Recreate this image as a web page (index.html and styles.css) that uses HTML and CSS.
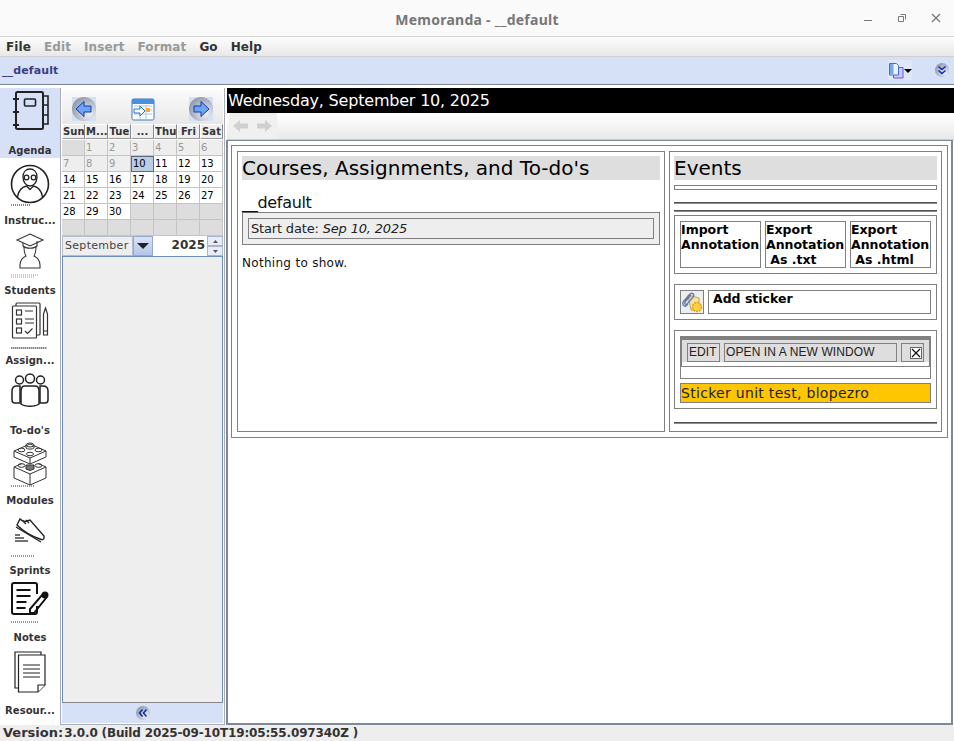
FILE: index.html
```html
<!DOCTYPE html>
<html lang="en">
<head>
<meta charset="utf-8">
<title>Memoranda - __default</title>
<link rel="stylesheet" href="styles.css">
</head>
<body>
<svg class="defs" width="0" height="0"><defs><radialGradient id="sphere" cx="70%" cy="70%" r="80%"><stop offset="0" stop-color="#eef0f6"/><stop offset="1" stop-color="#8d96a8"/></radialGradient></defs></svg>
<div class="app">
  <header class="titlebar">
    <div class="title-text">Memoranda - __default</div>
    <div class="win-controls">
      <svg width="16" height="16" viewBox="0 0 16 16"><path d="M0 10.500H8" stroke="#777" stroke-width="1" fill="none"/></svg>
      <svg width="16" height="16" viewBox="0 0 16 16"><path d="M1.500 6.500h5v5h-5z M3.500 4.500h5v5" stroke="#777" fill="none"/></svg>
      <svg width="16" height="16" viewBox="0 0 16 16"><path d="M1 4L9 12M9 4L1 12" stroke="#777" stroke-width="1.300" fill="none"/></svg>
    </div>
  </header>
  <nav class="menubar">
    <span class="menu">File</span><span class="menu off">Edit</span><span class="menu off">Insert</span><span class="menu off">Format</span><span class="menu">Go</span><span class="menu">Help</span>
  </nav>
  <div class="projectbar">
    <span class="project-name">__default</span>
    <div class="project-tools">
      <span class="doc-btn">
        <svg width="24" height="20" viewBox="0 0 24 20"><path d="M5.500 7.500h9.500v10.500H5.500z" fill="#cfc8fb" stroke="#6a5ae0"/><path d="M1.500 3.500h7l2 2v9.500H1.500z" fill="#eef4ff" stroke="#3a6ee0"/><path d="M2 4h3.500v10.500H2z" fill="#7aa8ee"/><path d="M16 9h8l-4 4z" fill="#000"/></svg>
      </span>
      <svg class="round-btn" width="14" height="14" viewBox="0 0 14 14"><circle cx="7" cy="7" r="7" fill="url(#sphere)"/><path d="M3.500 3.500L7 6.500L10.500 3.500M3.500 7.500L7 10.500L10.500 7.500" stroke="#0a2fa8" stroke-width="1.600" fill="none"/></svg>
    </div>
  </div>
  <div class="rule"></div>
  <main class="workspace">
    <aside class="sidebar">
      <div class="side-item selected">
        <svg width="60" height="55" viewBox="0 0 60 55"><g fill="none" stroke="#222" stroke-width="1.600"><rect x="16" y="4" width="27" height="37" rx="1.500" stroke-width="2"/><rect x="24.500" y="11" width="11" height="7" rx="1" /><path d="M13 11h6M13 24h6M13 37h6" stroke-width="2"/><path d="M43 8h5v9h-5M43 17h5v10h-5M43 27h5v9h-5"/></g></svg>
        <span class="side-label">Agenda</span>
      </div>
      <div class="side-item">
        <svg width="60" height="55" viewBox="0 0 60 55"><g fill="none" stroke="#222" stroke-width="1.300"><circle cx="30" cy="26" r="18.500" stroke-width="1.600"/><path d="M23 19c0-5 3-8 7-8s7 3 7 8c0 5-3 9-7 9s-7-4-7-9z"/><circle cx="26.500" cy="19.500" r="2.300"/><circle cx="33.500" cy="19.500" r="2.300"/><path d="M17.500 39c1-7 5-10 9-11l3.500 3.500 3.500-3.500c4 1 8 4 9 11"/></g><path d="M11 47h19" stroke="#888" stroke-width="2" stroke-dasharray="1 1"/></svg>
        <span class="side-label">Instruc...</span>
      </div>
      <div class="side-item">
        <svg width="60" height="55" viewBox="0 0 60 55"><g fill="none" stroke="#333" stroke-width="1.100"><path d="M30 6l13 6-13 6-13-6z"/><path d="M23 15v3c3 3 11 3 14 0v-3M37 13v5"/><path d="M24 19c0 6 2 9 2 9-4 2-6 4-6 9v3h20v-3c0-5-2-7-6-9 0 0 2-3 2-9"/></g><path d="M11 47h28M11 49h24" stroke="#999" stroke-width="1" stroke-dasharray="1 1"/></svg>
        <span class="side-label">Students</span>
      </div>
      <div class="side-item">
        <svg width="60" height="55" viewBox="0 0 60 55"><g fill="none" stroke="#333" stroke-width="1.200"><rect x="16" y="5" width="24" height="32" rx="1"/><rect x="12.500" y="8" width="24" height="32" rx="1" fill="#fff"/><rect x="16.500" y="12" width="5" height="5"/><rect x="16.500" y="21" width="5" height="5"/><rect x="16.500" y="30" width="5" height="5"/><path d="M25 13h8M25 21h9M25 25h9M25 33l2.500 2.500 5-5"/><path d="M43.500 16l2-6 2 6v21h-4zM43.500 33h4"/></g><path d="M11 50h36" stroke="#888" stroke-width="2" stroke-dasharray="1.500 .5"/></svg>
        <span class="side-label">Assign...</span>
      </div>
      <div class="side-item">
        <svg width="60" height="55" viewBox="0 0 60 55"><g fill="#fff" stroke="#222" stroke-width="1.500"><circle cx="19.500" cy="12" r="4"/><circle cx="40.500" cy="12" r="4"/><path d="M17 18c-3 0-5 1-5 5v9c0 2 1 3 3 3h5V18zM43 18c3 0 5 1 5 5v9c0 2-1 3-3 3h-5V18z"/><circle cx="30" cy="10.500" r="4.500"/><path d="M25 18h10c3 0 4 2 4 5v13c-4 3-14 3-18 0V23c0-3 1-5 4-5z"/></g></svg>
        <span class="side-label">To-do's</span>
      </div>
      <div class="side-item">
        <svg width="60" height="55" viewBox="0 0 60 55"><g fill="none" stroke="#333" stroke-width="1"><path d="M14 13l16-7 16 7-16 7zM14 13v6l16 7 16-7v-6M30 20v6"/><ellipse cx="30" cy="7" rx="4" ry="2"/><path d="M26 7v3c1 1.500 7 1.500 8 0V7"/><ellipse cx="21.500" cy="12" rx="3.500" ry="1.800"/><ellipse cx="38.500" cy="12" rx="3.500" ry="1.800"/><ellipse cx="30" cy="16" rx="3.500" ry="1.800"/><path d="M14 29l8-3.500M46 29l-8-3.500M14 29l16 7 16-7M14 29v11l16 7 16-7V29M30 36v11"/><ellipse cx="21.500" cy="27.500" rx="3.500" ry="1.800"/><ellipse cx="38.500" cy="27.500" rx="3.500" ry="1.800"/><path d="M26 27h8v4l-4 1.500-4-1.500z" fill="#777"/></g><path d="M11 48h24" stroke="#999" stroke-width="2" stroke-dasharray="1 1"/></svg>
        <span class="side-label">Modules</span>
      </div>
      <div class="side-item">
        <svg width="60" height="55" viewBox="0 0 60 55"><g fill="none" stroke="#222" stroke-width="1.400"><path d="M17 17l3-6c2 2 4 3 7 2l3-1 14 16v2c0 2-2 2-4 1-9-3-17-8-23-14z" fill="#fff"/><path d="M16 19l25 15M23 13l3 3M26 12l3 3"/></g><path d="M15 27h5M15 30h9M15 33h13" stroke="#444" stroke-width="1.400"/><path d="M11 48h24" stroke="#999" stroke-width="2" stroke-dasharray="1 1"/></svg>
        <span class="side-label">Sprints</span>
      </div>
      <div class="side-item notes">
        <svg width="60" height="52" viewBox="0 0 60 52"><g fill="none" stroke="#111" stroke-width="2"><path d="M37 28v6c0 2-1 2-2 2H14c-1 0-2 0-2-2V7c0-1 1-2 2-2h21c1 0 2 1 2 2v9"/><path d="M16.500 12h14M16.500 18h14M16.500 24h10M16.500 30h9"/><path d="M30 35v-4l12-14 4 3-12 15z"/></g><circle cx="45" cy="17" r="3.500" fill="#111"/><path d="M11 44h28" stroke="#999" stroke-width="2" stroke-dasharray="1 1"/></svg>
        <span class="side-label">Notes</span>
      </div>
      <div class="side-item resources">
        <svg width="60" height="58" viewBox="0 0 60 58"><g fill="#fff" stroke="#222" stroke-width="1.200"><path d="M15 7h26v36H15z"/><path d="M18.500 10h26.500v30l-7 7H18.500z"/><path d="M38 47v-7h7"/></g><path d="M23 20h17M23 24h17M23 28h17M23 32h17" stroke="#222" stroke-width="1.200"/></svg>
        <span class="side-label">Resour...</span>
      </div>
    </aside>

    <section class="calendar-panel">
      <div class="cal-nav">
        <svg class="nav-tile" width="24" height="24" viewBox="0 0 24 24"><rect width="24" height="24" fill="#d4e2f6"/><circle cx="12" cy="12" r="12" fill="url(#sphere)"/><path d="M4 12l8-7.500V9h7v6h-7v4.500z" fill="#6fa4f4" stroke="#0a3ab0"/></svg>
        <svg class="nav-today" width="24" height="24" viewBox="0 0 24 24"><rect x="1" y="2" width="22" height="21" rx="1.500" fill="#fff" stroke="#3a7ac0"/><rect x="1" y="2" width="22" height="5" fill="#4a90d8"/><path d="M3 9h18M3 13h18M3 17h18M9 8v14M15 8v14" stroke="#a8c8ec" fill="none"/><path d="M3 12h6V9l5 5-5 5v-3H3z" fill="#fff" stroke="#2a70c8"/><rect x="15" y="11" width="4" height="4" fill="#f8a830"/></svg>
        <svg class="nav-tile" width="24" height="24" viewBox="0 0 24 24"><rect width="24" height="24" fill="#d4e2f6"/><circle cx="12" cy="12" r="12" fill="url(#sphere)"/><path d="M20 12l-8-7.500V9H5v6h7v4.500z" fill="#6fa4f4" stroke="#0a3ab0"/></svg>
      </div>
      <div class="cal-grid">
        <div class="cal-head">Sun</div><div class="cal-head">M...</div><div class="cal-head">Tue</div><div class="cal-head">...</div><div class="cal-head">Thu</div><div class="cal-head">Fri</div><div class="cal-head">Sat</div>
        <div class="cal-cell empty"></div><div class="cal-cell other">1</div><div class="cal-cell other">2</div><div class="cal-cell other">3</div><div class="cal-cell other">4</div><div class="cal-cell other">5</div><div class="cal-cell other">6</div>
        <div class="cal-cell other">7</div><div class="cal-cell other">8</div><div class="cal-cell other">9</div><div class="cal-cell today">10</div><div class="cal-cell">11</div><div class="cal-cell">12</div><div class="cal-cell">13</div>
        <div class="cal-cell">14</div><div class="cal-cell">15</div><div class="cal-cell">16</div><div class="cal-cell">17</div><div class="cal-cell">18</div><div class="cal-cell">19</div><div class="cal-cell">20</div>
        <div class="cal-cell">21</div><div class="cal-cell">22</div><div class="cal-cell">23</div><div class="cal-cell">24</div><div class="cal-cell">25</div><div class="cal-cell">26</div><div class="cal-cell">27</div>
        <div class="cal-cell">28</div><div class="cal-cell">29</div><div class="cal-cell">30</div><div class="cal-cell empty"></div><div class="cal-cell empty"></div><div class="cal-cell empty"></div><div class="cal-cell empty"></div>
        <div class="cal-cell empty"></div><div class="cal-cell empty"></div><div class="cal-cell empty"></div><div class="cal-cell empty"></div><div class="cal-cell empty"></div><div class="cal-cell empty"></div><div class="cal-cell empty"></div>
      </div>
      <div class="cal-controls">
        <div class="month-value">September</div>
        <div class="month-arrow"><svg width="12" height="6" viewBox="0 0 12 6"><path d="M0 0h12L6 6z" fill="#222"/></svg></div>
        <div class="year-value">2025</div>
        <div class="spinner">
          <div class="spin"><svg width="5" height="3" viewBox="0 0 5 3"><path d="M2.500 0L5 3H0z" fill="#556"/></svg></div>
          <div class="spin"><svg width="5" height="3" viewBox="0 0 5 3"><path d="M0 0h5L2.500 3z" fill="#556"/></svg></div>
        </div>
      </div>
      <div class="event-list"></div>
      <div class="collapse-bar">
        <svg width="14" height="14" viewBox="0 0 14 14"><circle cx="7" cy="7" r="7" fill="url(#sphere)"/><path d="M6.500 3.500L3.500 7l3 3.500M10.500 3.500L7.500 7l3 3.500" stroke="#0a2fa8" stroke-width="1.600" fill="none"/></svg>
      </div>
    </section>

    <section class="content">
      <div class="date-bar">Wednesday, September 10, 2025</div>
      <div class="history-bar">
        <div class="history-btns">
          <svg width="18" height="14" viewBox="0 0 18 14"><path d="M1 7l7-6v3.500h8v5H8V13z" fill="#d0d0d0"/></svg>
          <svg width="18" height="14" viewBox="0 0 18 14"><path d="M17 7l-7-6v3.500H2v5h8V13z" fill="#d0d0d0"/></svg>
        </div>
      </div>
      <div class="page">
        <div class="outer-box">
          <div class="col-left">
            <h2 class="heading">Courses, Assignments, and To-do's</h2>
            <div class="project-title">__default</div>
            <div class="date-box"><div class="date-inner">Start date: <em>Sep 10, 2025</em></div></div>
            <p class="nothing">Nothing to show.</p>
          </div>
          <div class="col-right">
            <h2 class="heading">Events</h2>
            <div class="empty-box"></div>
            <div class="hr first"></div>
            <div class="hr second"></div>
            <div class="gray-box actions">
              <div class="action">Import<br>Annotation</div>
              <div class="action">Export<br>Annotation<br>&nbsp;As .txt</div>
              <div class="action">Export<br>Annotation<br>&nbsp;As .html</div>
            </div>
            <div class="gray-box sticker-add">
              <div class="sticker-icon">
                <svg width="22" height="22" viewBox="0 0 22 22"><path d="M7 4l11 3v12H10z" fill="#f4e4a0" stroke="#b8a860"/><path d="M2 11l7-8c2-2 5 0 3 3l-6 7c-1 1-3 0-2-2l6-7M2 11c-1 2 1 5 3 4l2-2" fill="none" stroke="#6a7ab0" stroke-width="1.400"/><circle cx="16" cy="16" r="4.500" fill="#fbd040" stroke="#f09810" stroke-dasharray="2 1" stroke-width="1.500"/></svg>
              </div>
              <div class="sticker-btn">Add sticker</div>
            </div>
            <div class="gray-box sticker">
              <div class="sticker-frame">
                <div class="sticker-top">
                  <div class="sticker-tools">
                    <span class="tool edit">EDIT</span>
                    <span class="tool open">OPEN IN A NEW WINDOW</span>
                    <span class="tool close"><span class="x-box"><svg width="10" height="10" viewBox="0 0 10 10"><path d="M1 1l8 8M9 1l-8 8" stroke="#111" stroke-width="1.200"/></svg></span></span>
                  </div>
                </div>
                <div class="sticker-space"></div>
              </div>
              <div class="sticker-text">Sticker unit test, blopezro</div>
            </div>
            <div class="hr third"></div>
          </div>
        </div>
      </div>
    </section>
  </main>
  <footer class="statusbar"><span class="status-label">Version:</span><span class="status-value">3.0.0 (Build 2025-09-10T19:05:55.097340Z )</span></footer>
</div>
</body>
</html>
```
FILE: styles.css
```css
* { box-sizing: border-box; }
html, body { margin: 0; padding: 0; }
body { font-family: "DejaVu Sans", sans-serif; background: #fff; color: #000; }
.defs { display: block; height: 0; }
.app { width: 954px; height: 741px; display: flex; flex-direction: column; overflow: hidden; }

.titlebar { height: 37px; background: #fafafa; border-bottom: 1px solid #d2d2d2; display: flex; align-items: center; justify-content: center; position: relative; flex: none; }
.title-text { font: 700 14px "Noto Sans", sans-serif; letter-spacing: .25px; color: #777; position: relative; top: 1px; }
.win-controls { position: absolute; right: 7px; top: 10px; display: flex; gap: 17px; }
.win-controls svg { display: block; }
.win-controls svg:nth-child(3) { margin-left: 1px; }

.menubar { height: 20px; background: linear-gradient(#fdfdfd, #e8e8e8); flex: none; display: flex; align-items: center; padding-left: 6px; gap: 13px; font-size: 12px; letter-spacing: .1px; font-weight: 700; color: #333; border-bottom: 1px solid #cfcfcf; }
.menu.off { color: #999; }

.projectbar { height: 26px; background: #d6e0f7; flex: none; display: flex; align-items: center; justify-content: space-between; padding-left: 2px; padding-right: 5px; }
.project-name { font-size: 11px; letter-spacing: .12px; font-weight: 700; color: #3d3d82; }
.project-tools { display: flex; align-items: center; gap: 23px; }
.doc-btn { width: 24px; height: 20px; background: #dfe8f8; display: block; }
.doc-btn svg, .round-btn { display: block; }

.rule { height: 5px; flex: none; background: #fff; border-top: 1px solid #ddd; box-shadow: inset 0 1px 0 #7e8a9a; }

.workspace { flex: 1; display: flex; min-height: 0; }

.sidebar { width: 60px; flex: none; background: #fff; display: flex; flex-direction: column; }
.side-item { height: 70px; flex: none; display: flex; flex-direction: column; align-items: center; }
.side-item svg { display: block; flex: none; }
.side-item.selected { background: #d6e0f7; }
.side-item.notes { height: 67px; }
.side-item.resources { height: 73px; }
.side-label { font-size: 10px; letter-spacing: .05px; font-weight: 700; color: #333; line-height: 15px; white-space: nowrap; }

.calendar-panel { width: 165px; flex: none; display: flex; flex-direction: column; border-left: 1px solid #a8adb8; border-right: 1px solid #a8adb8; border-bottom: 1px solid #a8adb8; padding: 2px 1px 1px; background: #fff; }
.cal-nav { height: 34px; background: linear-gradient(#fafafa, #e8e8e8); display: flex; align-items: center; justify-content: space-between; padding: 4px 10px 0; flex: none; }
.nav-tile, .nav-today { display: block; }
.cal-grid { display: grid; grid-template-columns: repeat(7, 23px); grid-auto-rows: 16px; flex: none; width: 161px; }
.cal-head { height: 15px; background: #eee; border: 1px solid #fff; border-right-color: #888; border-bottom-color: #999; font-size: 10px; letter-spacing: .1px; font-weight: 700; color: #333; line-height: 13px; text-align: center; overflow: hidden; white-space: nowrap; }
.cal-cell { background: #fff; border-right: 1px solid #c4c4c4; border-bottom: 1px solid #c4c4c4; font-size: 10px; line-height: 15px; padding-left: 1px; color: #000; }
.cal-cell.other { background: #eee; color: #999; }
.cal-cell.empty { background: #ddd; }
.cal-cell.today { background: #b9cde4; border: 1px solid #667; line-height: 13px; padding-left: 1px; }
.cal-controls { height: 20px; display: flex; flex: none; background: #fff; width: 161px; }
.month-value { width: 71px; background: #eee; border: 1px solid #b4bcd0; font-size: 11px; letter-spacing: .3px; color: #444; line-height: 17px; padding-left: 2px; }
.month-arrow { width: 20px; background: linear-gradient(#d8e2f8, #b4c6ea); display: flex; align-items: center; justify-content: center; border: 1px solid #9aa8c8; }
.year-value { width: 54px; font-size: 12px; font-weight: 700; color: #333; text-align: right; padding-right: 2px; line-height: 18px; }
.spinner { width: 16px; display: flex; flex-direction: column; }
.spin { flex: 1; background: #e8ecf4; border: 1px solid #a8b4d0; display: flex; align-items: center; justify-content: center; }
.spin svg { display: block; }
.event-list { flex: 1; background: #eee; border: 1px solid #6f8ec0; border-bottom-color: #888; min-height: 0; }
.collapse-bar { height: 20px; flex: none; background: #d6e0f7; display: flex; align-items: center; justify-content: center; }
.collapse-bar svg { display: block; }

.content { flex: 1; min-width: 0; display: flex; flex-direction: column; margin-left: 2px; }
.date-bar { height: 25px; flex: none; background: #000; color: #fff; font-size: 16px; letter-spacing: -.2px; padding: 1px 0 0 1px; line-height: 24px; white-space: nowrap; }
.history-bar { height: 27px; flex: none; background: linear-gradient(#fff, #e9e9e9); border-bottom: 1px solid #ccc; padding-left: 2px; }
.history-btns { width: 48px; height: 26px; background: #f0f0f0; display: flex; align-items: center; gap: 5px; padding-left: 3px; }
.history-btns svg { display: block; }
.page { flex: 1; background: #fff; border: 2px solid #7e8a9a; border-top-width: 1px; margin: 0 1px 0 -1px; padding: 4px 3px 0; min-height: 0; }
.outer-box { border: 1px solid #808080; height: 293px; padding: 5px; display: flex; gap: 4px; }
.col-left, .col-right { border: 1px solid #808080; padding: 4px; height: 281px; }
.col-left { width: 428px; flex: none; }
.col-right { flex: 1; min-width: 0; }
.heading { margin: 0; height: 24px; background: #dedede; font-size: 20px; font-weight: 400; line-height: 24px; padding-left: 0; white-space: nowrap; color: #000; }
.project-title { font-size: 16px; letter-spacing: -.3px; line-height: 19px; margin-top: 13px; color: #111; }
.date-box { background: #eee; border: 1px solid #808080; padding: 5px; height: 33px; }
.date-inner { border: 1px solid #808080; height: 21px; font-size: 13px; letter-spacing: -.17px; line-height: 19px; padding-left: 2px; color: #222; }
.nothing { margin: 11px 0 0; font-size: 12px; letter-spacing: .3px; line-height: 14px; color: #111; }
.empty-box { height: 5px; border: 1px solid #808080; margin-top: 5px; }
.hr { height: 2px; background: linear-gradient(#333, #aaa); }
.hr.first { margin-top: 12px; }
.hr.second { margin-top: 6px; }
.hr.third { margin-top: 13px; }
.gray-box { border: 1px solid #808080; padding: 5px; }
.actions { margin-top: 3px; height: 59px; display: flex; gap: 4px; }
.action { flex: 1; border: 1px solid #808080; font-size: 12.5px; font-weight: 700; line-height: 15px; white-space: nowrap; height: 47px; color: #000; }
.sticker-add { margin-top: 10px; height: 36px; display: flex; gap: 4px; }
.sticker-icon { width: 24px; height: 24px; border: 1px solid #808080; flex: none; background: #eee; }
.sticker-icon svg { display: block; }
.sticker-btn { flex: 1; border: 1px solid #808080; font-size: 12.5px; font-weight: 700; line-height: 15px; padding-left: 4px; }
.sticker { margin-top: 10px; height: 79px; }
.sticker-frame { border: 1px solid #808080; height: 43px; display: flex; flex-direction: column; }
.sticker-top { height: 30px; border: 1px solid #808080; border-top-width: 3px; flex: none; background: #fff; }
.sticker-tools { background: #dedede; height: 22px; padding: 3px 0 0 5px; display: flex; align-items: stretch; }
.tool { border: 1px solid #808080; font: 12px/17px "Liberation Sans", sans-serif; letter-spacing: .1px; color: #222; }
.tool.edit { width: 33px; padding-left: 1px; }
.tool.open { width: 173px; margin-left: 4px; padding-left: 1px; }
.tool.close { width: 23px; margin-left: 4px; display: flex; align-items: center; justify-content: flex-end; padding-right: 1px; }
.x-box { width: 12px; height: 12px; border: 1px solid #666; background: #fff; display: block; line-height: 0; }
.x-box svg { display: block; }
.sticker-space { flex: 1; }
.sticker-text { margin-top: 4px; height: 20px; background: #fec600; border: 1px solid #808080; font-size: 14px; letter-spacing: .3px; line-height: 18px; color: #222; white-space: nowrap; }

.statusbar { height: 16px; flex: none; background: #eee; font-size: 13px; font-weight: 700; line-height: 16px; color: #333; padding-left: 3px; white-space: nowrap; display: flex; gap: 1px; }
.status-value { font-size: 12px; letter-spacing: -.15px; }
```
